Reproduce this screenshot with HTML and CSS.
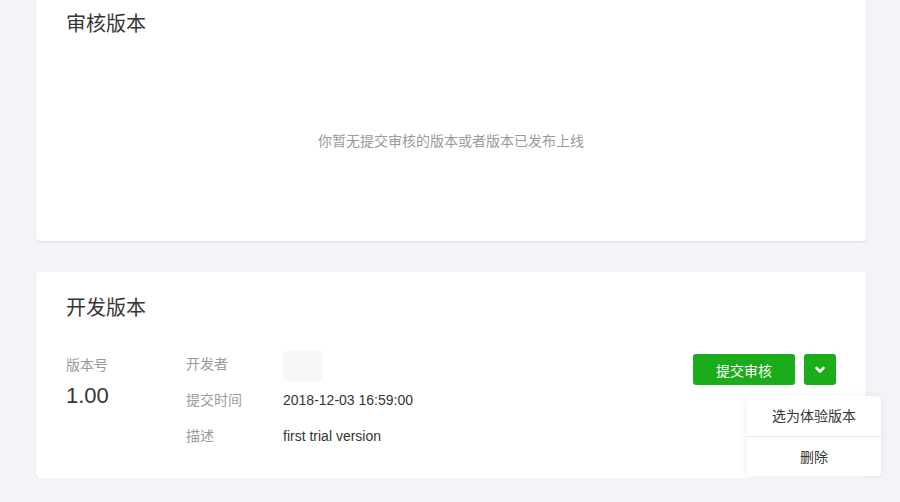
FILE: index.html
```html
<!DOCTYPE html>
<html lang="zh-CN">
<head>
    <meta charset="UTF-8">
    <meta name="viewport" content="width=device-width, initial-scale=1.0">
    <title>版本管理</title>
    <link rel="stylesheet" href="styles.css">
</head>
<body>
    <div class="page">
        <div class="card card-review">
            <h2 class="card-title">审核版本</h2>
            <div class="empty-tip">你暂无提交审核的版本或者版本已发布上线</div>
        </div>

        <div class="card card-dev">
            <h2 class="card-title">开发版本</h2>
            <div class="version-info">
                <div class="version-col">
                    <div class="label">版本号</div>
                    <div class="version-num">1.00</div>
                </div>
                <div class="detail-col">
                    <div class="detail-row">
                        <span class="label detail-label">开发者</span>
                        <span class="avatar-blank"></span>
                    </div>
                    <div class="detail-row">
                        <span class="label detail-label">提交时间</span>
                        <span class="value">2018-12-03 16:59:00</span>
                    </div>
                    <div class="detail-row">
                        <span class="label detail-label">描述</span>
                        <span class="value">first trial version</span>
                    </div>
                </div>
                <div class="actions">
                    <button class="btn btn-primary">提交审核</button>
                    <div class="dropdown">
                        <button class="btn btn-icon">
                            <svg width="12" height="8" viewBox="0 0 12 8"><path d="M2.5 2l3.5 3.5 3.5-3.5" fill="none" stroke="#fff" stroke-width="2.6" stroke-linecap="round" stroke-linejoin="round"/></svg>
                        </button>
                        <ul class="dropdown-menu">
                            <li>选为体验版本</li>
                            <li>删除</li>
                        </ul>
                    </div>
                </div>
            </div>
        </div>
    </div>
</body>
</html>
```
FILE: styles.css
```css
* {
    box-sizing: border-box;
}

body {
    margin: 0;
    background-color: #f3f4f7;
    font-family: 'Liberation Sans', 'Noto Sans CJK SC', sans-serif;
    color: #353535;
    overflow: hidden;
}

.page {
    padding: 0 34px 0 36px;
}

.card {
    background-color: #fff;
    border-radius: 4px;
    box-shadow: 0 1px 2px rgba(0,0,0,0.12);
    padding: 24px 30px;
}

.card-review {
    margin-top: -12px;
    height: 253px;
}

.card-dev {
    margin-top: 31px;
    height: 206px;
}

.card-title {
    margin: 0;
    font-size: 20px;
    font-weight: normal;
    line-height: 24px;
    color: #353535;
}

.empty-tip {
    text-align: center;
    font-size: 14px;
    color: #9a9a9a;
    margin-top: 94px;
}

.version-info {
    display: flex;
    align-items: flex-start;
    margin-top: 26px;
}

.version-col {
    width: 120px;
    padding-top: 9px;
}

.label {
    font-size: 14px;
    color: #9a9a9a;
    line-height: 20px;
}

.version-num {
    font-size: 22px;
    line-height: 26px;
    margin-top: 8px;
    color: #353535;
}

.detail-col {
    flex-grow: 1;
}

.detail-row {
    display: flex;
    align-items: center;
    height: 36px;
}

.detail-label {
    width: 97px;
}

.value {
    font-size: 14px;
    color: #353535;
}

.avatar-blank {
    width: 39px;
    height: 30px;
    margin-top: 4px;
    background-color: #f7f7f7;
    border-radius: 2px;
}

.actions {
    display: flex;
    gap: 9px;
    margin-top: 8px;
}

.btn {
    height: 31px;
    border: none;
    border-radius: 3px;
    background-color: #1aad19;
    color: #fff;
    font-family: inherit;
    font-size: 14px;
    cursor: pointer;
}

.btn-primary {
    width: 102px;
}

.btn-icon {
    width: 32px;
    display: flex;
    align-items: center;
    justify-content: center;
    padding: 0;
}

.dropdown {
    position: relative;
}

.dropdown-menu {
    position: absolute;
    top: 42px;
    right: -45px;
    width: 134px;
    margin: 0;
    padding: 0;
    list-style: none;
    background-color: #fff;
    border-radius: 4px;
    box-shadow: 0 1px 8px rgba(0,0,0,0.08);
}

.dropdown-menu li {
    height: 40px;
    line-height: 40px;
    text-align: center;
    font-size: 14px;
    color: #353535;
}

.dropdown-menu li + li {
    border-top: 1px solid #e7e7eb;
}
```
